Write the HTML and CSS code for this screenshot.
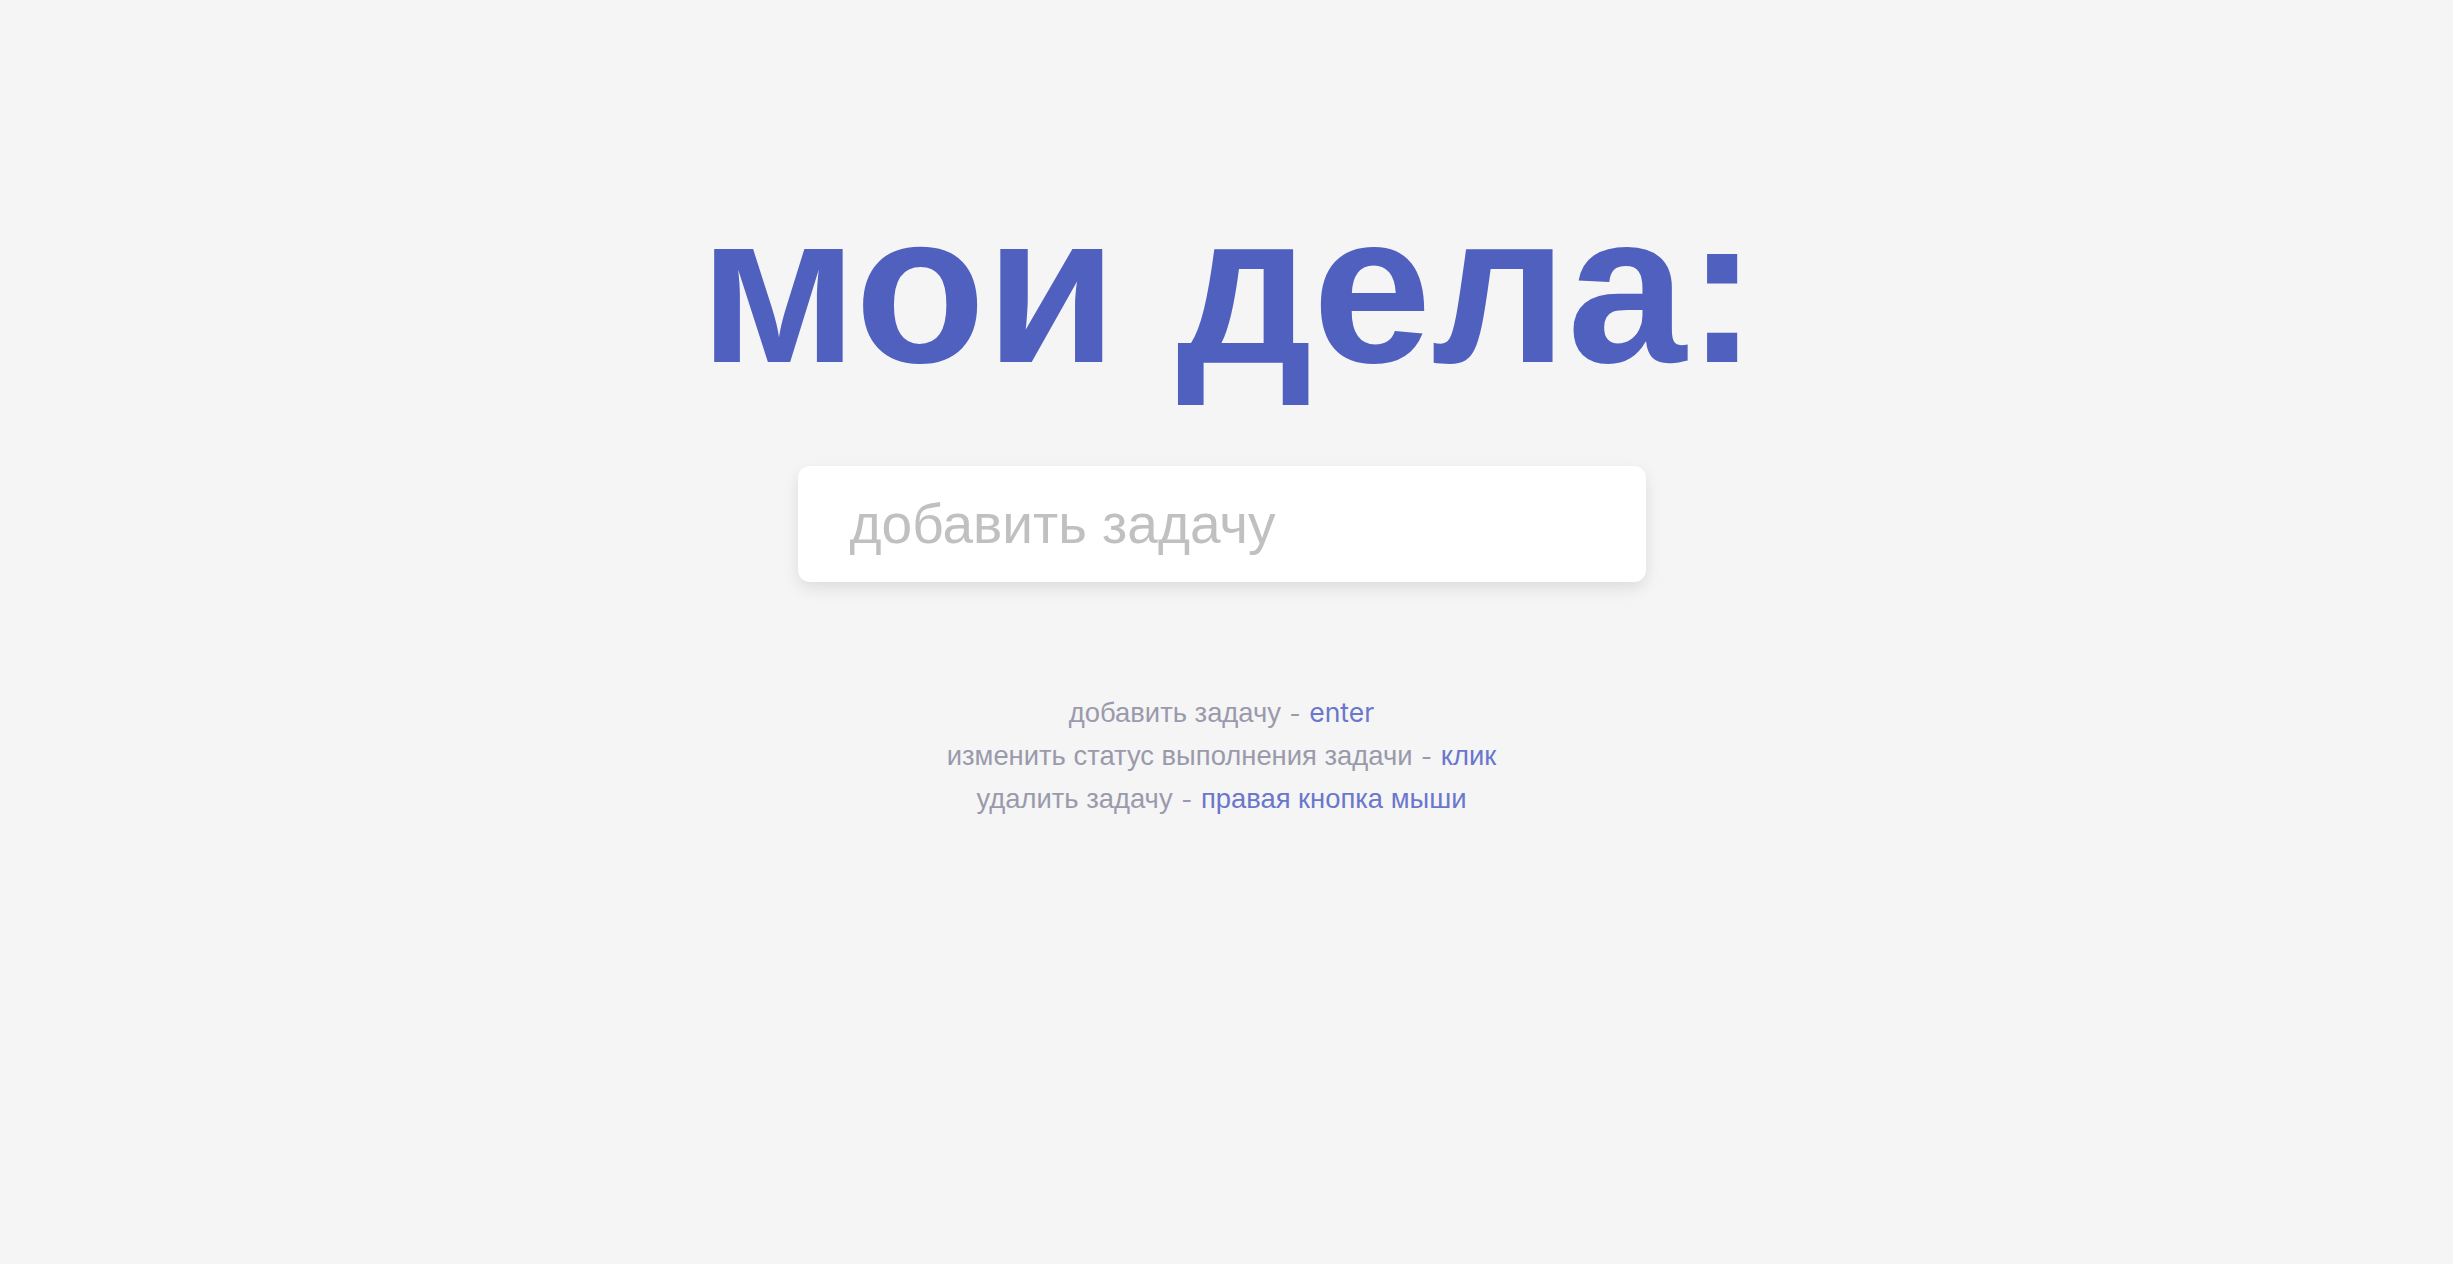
FILE: index.html
```html
<!DOCTYPE html>
<html lang="ru">
<head>
<meta charset="utf-8">
<title>мои дела</title>
<link rel="stylesheet" href="styles.css">
</head>
<body>
<main class="app">
  <h1 class="title">мои дела:</h1>
  <div class="input-box">
    <input class="task-input" type="text" placeholder="добавить задачу">
  </div>
  <div class="hints">
    <p class="hint">добавить задачу <span class="dash">-</span> <span class="key key-latin">enter</span></p>
    <p class="hint">изменить статус выполнения задачи <span class="dash">-</span> <span class="key">клик</span></p>
    <p class="hint">удалить задачу <span class="dash">-</span> <span class="key">правая кнопка мыши</span></p>
  </div>
</main>
</body>
</html>
```
FILE: styles.css
```css
html, body {
  margin: 0;
  padding: 0;
  background: #f5f5f5;
}
body {
  font-family: "Liberation Sans", Arial, sans-serif;
}
.app {
  display: flex;
  flex-direction: column;
  align-items: center;
  padding-top: 188px;
}
.title {
  margin: 0 0 0 4px;
  font-size: 214px;
  font-weight: 700;
  line-height: 200px;
  color: #5060bf;
}
.input-box {
  margin-top: 78px;
  margin-right: 10px;
  width: 848px;
  height: 116px;
  background: #fff;
  border-radius: 12px;
  box-shadow: 0 6px 16px rgba(0, 0, 0, 0.1);
  display: flex;
  align-items: center;
  box-sizing: border-box;
  padding: 0 52px;
}
.task-input {
  border: none;
  outline: none;
  background: transparent;
  width: 100%;
  font-family: "Liberation Sans", Arial, sans-serif;
  font-size: 55px;
  color: #333;
  padding: 0;
}
.task-input::placeholder {
  color: #c0c0c0;
}
.hints {
  margin-top: 109px;
  margin-right: 10px;
  display: flex;
  flex-direction: column;
  align-items: center;
}
.hint {
  margin: 0;
  font-size: 27.4px;
  line-height: 42px;
  color: #9a9aac;
}
.dash {
  font-family: "Inter", sans-serif;
  font-size: 24px;
  margin: 0 1px;
}
.key {
  color: #6a77cc;
}
.key-latin {
  font-family: "Inter", sans-serif;
  font-size: 26.5px;
}
```
